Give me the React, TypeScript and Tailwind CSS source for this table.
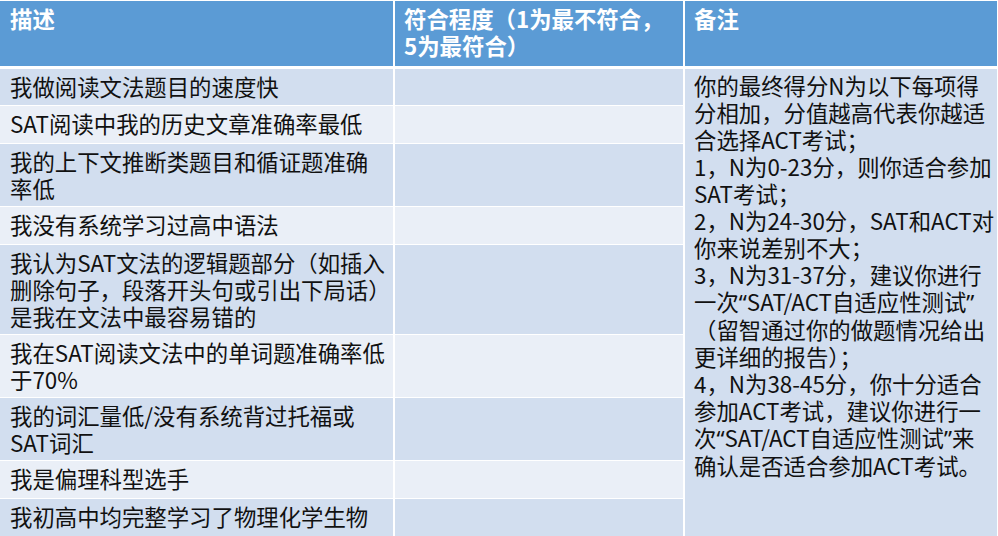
import type { ReactNode } from "react";

const rows: { lines: string[]; h: string; dark: boolean }[] = [
  { lines: ["我做阅读文法题目的速度快"], h: "h-[36px]", dark: true },
  { lines: ["SAT阅读中我的历史文章准确率最低"], h: "h-[37px]", dark: false },
  { lines: ["我的上下文推断类题目和循证题准确", "率低"], h: "h-[62px]", dark: true },
  { lines: ["我没有系统学习过高中语法"], h: "h-[37px]", dark: false },
  {
    lines: ["我认为SAT文法的逻辑题部分（如插入", "删除句子，段落开头句或引出下局话）", "是我在文法中最容易错的"],
    h: "h-[89px]",
    dark: true,
  },
  { lines: ["我在SAT阅读文法中的单词题准确率低", "于70%"], h: "h-[62px]", dark: false },
  { lines: ["我的词汇量低/没有系统背过托福或", "SAT词汇"], h: "h-[62px]", dark: true },
  { lines: ["我是偏理科型选手"], h: "h-[37px]", dark: false },
  { lines: ["我初高中均完整学习了物理化学生物"], h: "h-[37px]", dark: true },
];

const notes = [
  "你的最终得分N为以下每项得",
  "分相加，分值越高代表你越适",
  "合选择ACT考试；",
  "1，N为0-23分，则你适合参加",
  "SAT考试；",
  "2，N为24-30分，SAT和ACT对",
  "你来说差别不大；",
  "3，N为31-37分，建议你进行",
  "一次“SAT/ACT自适应性测试”",
  "（留智通过你的做题情况给出",
  "更详细的报告）；",
  "4，N为38-45分，你十分适合",
  "参加ACT考试，建议你进行一",
  "次“SAT/ACT自适应性测试”来",
  "确认是否适合参加ACT考试。",
];

// curly quotes in the source are the narrow latin ones, not full-width
function withQuotes(s: string): ReactNode[] {
  return s.split(/([“”])/).map((part, i) =>
    part === "“" || part === "”" ? (
      <span key={i} style={{ fontFamily: '"Noto Sans", sans-serif' }}>
        {part}
      </span>
    ) : (
      <span key={i}>{part}</span>
    )
  );
}

function Lines({ lines }: { lines: string[] }) {
  return (
    <>
      {lines.map((l, i) => (
        <div key={i} className="whitespace-nowrap">
          {withQuotes(l)}
        </div>
      ))}
    </>
  );
}

export default function App() {
  return (
    <div
      className="w-[998px] h-[536px] overflow-hidden bg-white pt-[1px] text-[22.4px] leading-[27px] text-[#111]"
      style={{ fontFamily: '"Noto Sans CJK SC", "Noto Sans", sans-serif' }}
    >
      <div className="grid grid-cols-[393px_288px_312px] gap-x-[2px]">
        <div className="h-[65px] bg-[#5b9bd5] px-[10px] pt-[4px] font-bold text-white">描述</div>
        <div className="h-[65px] bg-[#5b9bd5] px-[9px] pt-[4px] font-bold text-white">
          <Lines lines={["符合程度（1为最不符合，", "5为最符合）"]} />
        </div>
        <div className="h-[65px] bg-[#5b9bd5] px-[9px] pt-[4px] font-bold text-white">备注</div>
      </div>

      <div className="mt-[3px] grid grid-cols-[393px_288px_312px] gap-x-[2px] gap-y-[1px]">
        {rows.map((r, i) => (
          <div key={i} className="contents">
            <div
              className={`${r.h} px-[10px] pt-[4px] ${r.dark ? "bg-[#d2deef]" : "bg-[#eaeff7]"}`}
              style={{ gridRow: i + 1, gridColumn: 1 }}
            >
              <Lines lines={r.lines} />
            </div>
            <div
              className={`${r.h} ${r.dark ? "bg-[#d2deef]" : "bg-[#eaeff7]"}`}
              style={{ gridRow: i + 1, gridColumn: 2 }}
            />
          </div>
        ))}
        <div
          className="bg-[#d2deef] px-[9px] pt-[3px]"
          style={{ gridRow: `1 / span ${rows.length}`, gridColumn: 3 }}
        >
          <Lines lines={notes} />
        </div>
      </div>
    </div>
  );
}
